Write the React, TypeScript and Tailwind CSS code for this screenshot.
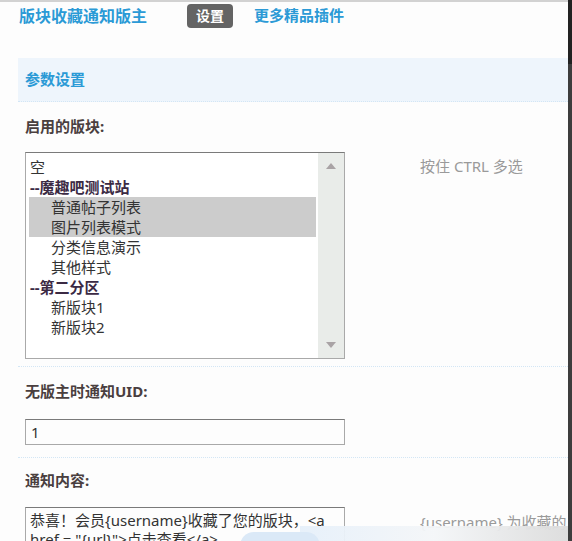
import type { ReactNode } from 'react'

const font = { fontFamily: '"Noto Sans", "Noto Sans CJK SC", sans-serif' }

function Label({ children }: { children: ReactNode }) {
  return <p className="h-[20px] text-[15px] font-bold leading-[20px] text-[#4a3f3f]">{children}</p>
}

function Divider() {
  return <div className="border-b border-dotted border-[#d3e6f5]" />
}

const options: { text: string; group?: boolean; indent?: boolean; selected?: boolean }[] = [
  { text: '空' },
  { text: '--魔趣吧测试站', group: true },
  { text: '普通帖子列表', indent: true, selected: true },
  { text: '图片列表模式', indent: true, selected: true },
  { text: '分类信息演示', indent: true },
  { text: '其他样式', indent: true },
  { text: '--第二分区', group: true },
  { text: '新版块1', indent: true },
  { text: '新版块2', indent: true },
]

function MultiSelect() {
  return (
    <div className="flex h-[207px] w-[320px] border border-[#a9a9a9] border-t-[#7a7a7a] bg-white">
      <ul className="flex-1 pb-[3px] pl-[3px] pr-[2px] pt-[4px]">
        {options.map((o) => (
          <li
            key={o.text}
            className={`h-[20px] text-[15px] leading-[20px] ${o.indent ? 'pl-[22px]' : 'pl-[1px]'} ${
              o.group ? 'font-bold text-[#3b2a44]' : 'text-[#333]'
            } ${o.selected ? 'bg-[#cccccc]' : ''}`}
          >
            {o.text}
          </li>
        ))}
      </ul>
      <div className="flex w-[26px] flex-col items-center justify-between bg-[#e9ece9] py-[10px]">
        <svg width="10" height="6" viewBox="0 0 10 6">
          <path d="M5 0 L10 6 L0 6 Z" fill="#a9a3a5" />
        </svg>
        <svg width="10" height="6" viewBox="0 0 10 6">
          <path d="M0 0 L10 0 L5 6 Z" fill="#a9a3a5" />
        </svg>
      </div>
    </div>
  )
}

export default function App() {
  return (
    <div className="flex h-[541px] w-[572px] overflow-hidden bg-white" style={font}>
      <div className="relative flex-1 overflow-hidden border-t-2 border-[#d2d2d2] bg-[#fdfdfd]">
        <nav className="flex h-[27px] items-center pl-[19px]">
          <h1 className="text-[16px] font-bold text-[#2b9ad6]">版块收藏通知版主</h1>
          <span className="ml-[40px] rounded-[4px] bg-[#646464] px-[9px] py-[2px] text-[14px] font-bold leading-[20px] text-white">
            设置
          </span>
          <a className="ml-[21px] text-[15px] font-bold text-[#2b9ad6]">更多精品插件</a>
        </nav>

        <div className="ml-[18px] mt-[29px] flex h-[44px] items-center border-b border-dotted border-[#d3e6f5] bg-[#eef5fc] pl-[7px]">
          <span className="text-[15px] font-bold text-[#2b9ad6]">参数设置</span>
        </div>

        <div className="ml-[18px]">
          <div className="pb-[7px] pl-[7px] pt-[14px]">
            <Label>启用的版块:</Label>
            <div className="mt-[16px] flex">
              <MultiSelect />
              <span className="ml-[75px] mt-[3px] text-[15px] text-[#9a9a9a]">按住 CTRL 多选</span>
            </div>
          </div>
          <Divider />
          <div className="pb-[12px] pl-[7px] pt-[14px]">
            <Label>无版主时通知UID:</Label>
            <div className="mt-[18px] flex h-[26px] w-[320px] items-center border border-[#a9a9a9] border-t-[#7a7a7a] pl-[5px] text-[15px] text-[#333]">
              1
            </div>
          </div>
          <Divider />
          <div className="pl-[7px] pt-[12px]">
            <Label>通知内容:</Label>
            <div className="mt-[17px] flex">
              <div className="h-[60px] w-[320px] shrink-0 border border-[#a9a9a9] border-t-[#7a7a7a] px-[4px] pt-[3px] text-[15px] leading-[19px] text-[#333]">
                恭喜！会员{'{username}'}收藏了您的版块，&lt;a href = "{'{url}'}"&gt;点击查看&lt;/a&gt;
              </div>
              <span className="ml-[75px] mt-[4px] whitespace-nowrap text-[15px] text-[#9a9a9a]">
                {'{username}'} 为收藏的用户
              </span>
            </div>
          </div>
        </div>

        <div className="absolute left-[300px] top-[524px] h-[17px] w-[268px] bg-gradient-to-r from-[#e6f0fa] via-[#f4f6f8] to-[#dcdcdc] opacity-95" />
        <div className="absolute left-[240px] top-[530px] h-[14px] w-[80px] rounded-t-full bg-[#dbe9f7]" />
      </div>
      <div className="flex w-[4px] flex-col">
        <div className="h-[64px] bg-[#222]" />
        <div className="flex-1 bg-[#3d3d3d]" />
      </div>
    </div>
  )
}
